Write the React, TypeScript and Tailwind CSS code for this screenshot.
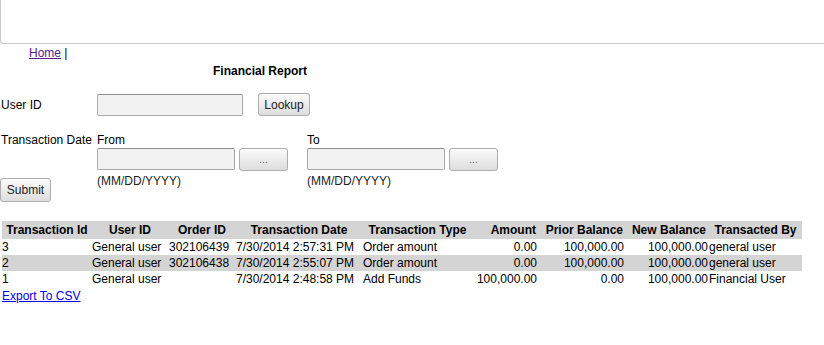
/**
 * Financial Report page — user lookup, date range filter and transaction table.
 */

const rows = [
  { id: '3', user: 'General user', order: '302106439', date: '7/30/2014 2:57:31 PM', type: 'Order amount', amount: '0.00', prior: '100,000.00', next: '100,000.00', by: 'general user' },
  { id: '2', user: 'General user', order: '302106438', date: '7/30/2014 2:55:07 PM', type: 'Order amount', amount: '0.00', prior: '100,000.00', next: '100,000.00', by: 'general user' },
  { id: '1', user: 'General user', order: '', date: '7/30/2014 2:48:58 PM', type: 'Add Funds', amount: '100,000.00', prior: '0.00', next: '100,000.00', by: 'Financial User' },
]

function TextBox({ width }: { width: string }) {
  return (
    <input
      type="text"
      className={`${width} h-[22px] rounded-[2px] border border-[#a9a9a9] border-t-[#8f8f8f] bg-[#f2f2f2] px-1 outline-none`}
    />
  )
}

function Button({ label, className }: { label: string; className: string }) {
  return (
    <button
      type="button"
      className={`${className} rounded-[3px] border border-[#adadad] bg-gradient-to-b from-[#fbfbfb] to-[#dddddd] text-[12px] leading-[14px] text-[#222]`}
    >
      {label}
    </button>
  )
}

function DateField({ label }: { label: string }) {
  return (
    <div className="flex flex-col w-[210px]">
      <span className="h-[14px]">{label}</span>
      <div className="flex items-start gap-[4px] mt-[1px] h-[23px]">
        <TextBox width="w-[138px]" />
        <Button label="..." className="w-[49px] h-[23px] !text-[#666] !text-[10px]" />
      </div>
      <span className="mt-[3px] text-[#222]">(MM/DD/YYYY)</span>
    </div>
  )
}

export default function App() {
  return (
    <div className="w-[824px] h-[345px] overflow-hidden bg-white text-black text-[12px] leading-[14px] font-['Liberation_Sans',Arial,sans-serif]">
      <div className="h-[44px] border-l border-b border-[#c8c8c8] rounded-bl-[4px]" />

      <div className="mt-[2px] pl-[29px] h-[14px]">
        <a href="#" className="text-[#551a8b] underline">Home</a> |
      </div>

      <div className="mt-[4px] pl-[213px] font-bold">Financial Report</div>

      <div className="mt-[15px] flex items-center h-[23px]">
        <span className="w-[97px] pl-[1px]">User ID</span>
        <TextBox width="w-[146px]" />
        <Button label="Lookup" className="ml-[15px] w-[52px] h-[23px]" />
      </div>

      <div className="mt-[17px] flex items-start">
        <div className="w-[97px] flex flex-col items-start">
          <span className="pl-[1px] h-[14px] whitespace-nowrap">Transaction Date</span>
          <Button label="Submit" className="mt-[31px] w-[51px] h-[24px]" />
        </div>
        <DateField label="From" />
        <DateField label="To" />
      </div>

      <table className="mt-[19px] ml-[2px] table-fixed border-collapse w-[800px]">
        <colgroup>
          <col className="w-[90px]" />
          <col className="w-[76px]" />
          <col className="w-[68px]" />
          <col className="w-[126px]" />
          <col className="w-[111px]" />
          <col className="w-[66px]" />
          <col className="w-[87px]" />
          <col className="w-[83px]" />
          <col className="w-[93px]" />
        </colgroup>
        <thead>
          <tr className="bg-[#d4d4d4] h-[18px]">
            <th className="p-0 text-center whitespace-nowrap">Transaction Id</th>
            <th className="p-0 text-center whitespace-nowrap">User ID</th>
            <th className="p-0 text-center whitespace-nowrap">Order ID</th>
            <th className="p-0 text-center whitespace-nowrap">Transaction Date</th>
            <th className="p-0 text-center whitespace-nowrap">Transaction Type</th>
            <th className="p-0 pr-[3px] text-right whitespace-nowrap">Amount</th>
            <th className="p-0 pr-[3px] text-right whitespace-nowrap">Prior Balance</th>
            <th className="p-0 pr-[3px] text-right whitespace-nowrap">New Balance</th>
            <th className="p-0 text-center whitespace-nowrap">Transacted By</th>
          </tr>
        </thead>
        <tbody>
          {rows.map((r, i) => (
            <tr key={r.id} className={`h-[16px] ${i === 1 ? 'bg-[#d4d4d4]' : 'bg-white'}`}>
              <td className="p-0 whitespace-nowrap">{r.id}</td>
              <td className="p-0 whitespace-nowrap">{r.user}</td>
              <td className="p-0 pl-[1px] whitespace-nowrap">{r.order}</td>
              <td className="p-0 whitespace-nowrap">{r.date}</td>
              <td className="p-0 pl-[1px] whitespace-nowrap">{r.type}</td>
              <td className="p-0 pr-[2px] text-right whitespace-nowrap">{r.amount}</td>
              <td className="p-0 pr-[2px] text-right whitespace-nowrap">{r.prior}</td>
              <td className="p-0 pr-[1px] text-right whitespace-nowrap">{r.next}</td>
              <td className="p-0 whitespace-nowrap">{r.by}</td>
            </tr>
          ))}
        </tbody>
      </table>

      <div className="mt-[2px] pl-[2px]">
        <a href="#" className="text-[#0000ee] underline">Export To CSV</a>
      </div>
    </div>
  )
}
